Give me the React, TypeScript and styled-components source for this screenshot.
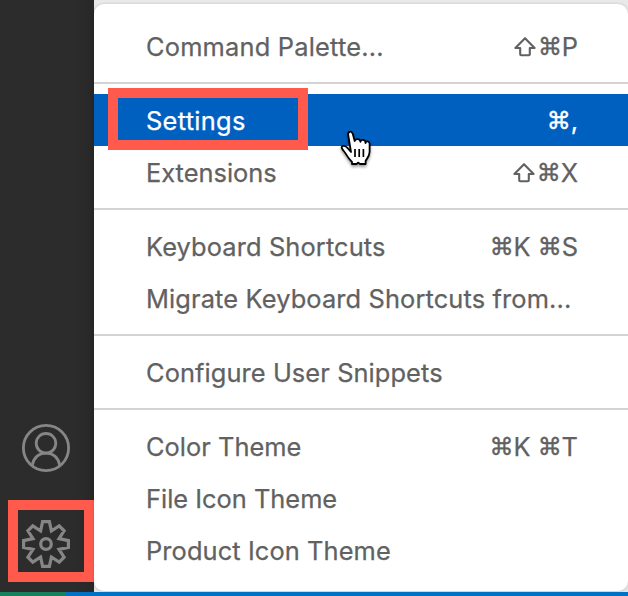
import React from "react";
import styled, { createGlobalStyle, css } from "styled-components";

const GlobalStyle = createGlobalStyle`
  html, body { margin: 0; padding: 0; overflow: hidden; }
  *, *::before, *::after { box-sizing: border-box; }
`;

const Window = styled.div`
  position: relative;
  display: grid;
  grid-template-columns: 94px 1fr;
  grid-template-rows: 592px 4px;
  width: 628px;
  height: 596px;
  overflow: hidden;
  background: #e9e9e9;
  font-family: Inter, "Liberation Sans", sans-serif;
`;

const ActivityBar = styled.nav`
  display: flex;
  flex-direction: column;
  justify-content: flex-end;
  align-items: flex-start;
  padding: 0 0 10px 8px;
  background: linear-gradient(to right, #2c2c2c 0, #2c2c2c 74px, #272727 100%);
`;

const Activity = styled.button<{ $marked?: boolean }>`
  display: flex;
  align-items: center;
  width: 86px;
  border: 0;
  background: none;
  color: #868686;
  ${(p) =>
    p.$marked
      ? css`
          height: 82px;
          padding: 6px 0 0 4px;
          border: 10px solid #ff5a4c;
        `
      : css`
          height: 104px;
          padding: 0 0 0 14px;
        `}
`;

const Glyph = styled.svg`
  display: block;
  flex: none;
  overflow: visible;
`;

const Editor = styled.main`
  padding-top: 4px;
  background: linear-gradient(#e9e9e9, #e5e5e5);
`;

const Menu = styled.div`
  height: 587px;
  padding: 16px 0 15px;
  border-radius: 10px;
  background: #fff;
  box-shadow: 0 0 3px rgba(0, 0, 0, 0.18);
`;

const MenuItem = styled.div<{ $active?: boolean }>`
  display: flex;
  align-items: center;
  justify-content: space-between;
  height: 52px;
  padding: 2px 50px 0 52px;
  background: ${(p) => (p.$active ? "#0060c0" : "transparent")};
  color: ${(p) => (p.$active ? "#fff" : "#616161")};
  -webkit-text-stroke: 0.25px currentColor;
`;

const Label = styled.span<{ $tracking: number }>`
  font-size: 25.4px;
  line-height: 50px;
  white-space: nowrap;
  letter-spacing: ${(p) => p.$tracking}px;
`;

const Shortcut = styled.span`
  display: flex;
  align-items: center;
  font-size: 25.4px;
  line-height: 50px;
  white-space: pre;
`;

const KeySymbol = styled.span`
  display: inline-block;
  width: 23.9px;
  font-family: "DejaVu Sans", sans-serif;
  font-size: 24px;
  -webkit-text-stroke: 0.4px currentColor;
`;

const ShiftGlyph = styled(Glyph)`
  margin: 0 1.5px 0 0;
`;

const Separator = styled.hr`
  height: 2px;
  margin: 10px 0;
  border: 0;
  background: #d4d4d4;
`;

const RemoteStatus = styled.div`
  width: 66px;
  background: #16825d;
`;

const StatusBar = styled.footer`
  grid-column: 1 / 3;
  display: flex;
  background: #0072c6;
`;

const Highlight = styled.div`
  position: absolute;
  left: 108px;
  top: 88px;
  width: 200px;
  height: 62px;
  border: 10px solid #ff5a4c;
`;

const Pointer = styled.svg`
  position: absolute;
  left: 338px;
  top: 128px;
  overflow: visible;
  filter: drop-shadow(0 2px 1.5px rgba(0, 0, 0, 0.4));
`;

type Entry = { label: string; keys?: string; active?: boolean; tracking?: number };

const groups: Entry[][] = [
  [{ label: "Command Palette...", keys: "⇧⌘P", tracking: 0.2 }],
  [
    { label: "Settings", keys: "⌘,", active: true, tracking: 0.3 },
    { label: "Extensions", keys: "⇧⌘X" },
  ],
  [
    { label: "Keyboard Shortcuts", keys: "⌘K ⌘S", tracking: 0.12 },
    { label: "Migrate Keyboard Shortcuts from...", tracking: 0.13 },
  ],
  [{ label: "Configure User Snippets", tracking: 0.09 }],
  [
    { label: "Color Theme", keys: "⌘K ⌘T", tracking: 0.03 },
    { label: "File Icon Theme" },
    { label: "Product Icon Theme", tracking: 0.1 },
  ],
];

function ShiftIcon() {
  return (
    <ShiftGlyph
      width="22"
      height="20"
      viewBox="0 0 22 20"
      fill="none"
      stroke="currentColor"
      strokeWidth="2.1"
      strokeLinejoin="round"
      role="img"
      aria-label="Shift"
    >
      <path d="M11 1.2L20.6 11H15.8V17.2Q15.8 18.2 14.8 18.2H7.2Q6.2 18.2 6.2 17.2V11H1.4Z" />
    </ShiftGlyph>
  );
}

function Keys({ value }: { value: string }) {
  return (
    <Shortcut>
      {Array.from(value).map((c, i) => {
        if (c === "⇧") return <ShiftIcon key={i} />;
        if (c === "⌘") return <KeySymbol key={i}>{c}</KeySymbol>;
        return <span key={i}>{c}</span>;
      })}
    </Shortcut>
  );
}

function AccountIcon() {
  return (
    <Glyph width="48" height="48" viewBox="0 0 48 48" fill="none" stroke="currentColor" strokeWidth="2.8">
      <circle cx="24" cy="24" r="22.6" />
      <circle cx="24" cy="19.3" r="9.8" />
      <path d="M10.3 41.5C11.4 33.8 16.8 29.1 24 29.1S36.6 33.8 37.7 41.5" />
    </Glyph>
  );
}

const gearPath =
  "M20.6 1.6H27.4L29.4 11L37.2 5.9L42.1 10.8L37 18.6L46.4 20.6V27.4L37 29.4L42.1 37.2L37.2 42.1L29.4 37L27.4 46.4H20.6L18.6 37L10.8 42.1L5.9 37.2L11 29.4L1.6 27.4V20.6L11 18.6L5.9 10.8L10.8 5.9L18.6 11Z";

function GearIcon() {
  return (
    <Glyph width="48" height="48" viewBox="0 0 48 48" fill="none" stroke="currentColor" strokeWidth="3.2">
      <path d={gearPath} />
      <circle cx="24" cy="24" r="5.3" />
    </Glyph>
  );
}

export default function App() {
  return (
    <>
      <GlobalStyle />
      <Window>
        <ActivityBar>
          <Activity aria-label="Accounts">
            <AccountIcon />
          </Activity>
          <Activity aria-label="Manage" $marked>
            <GearIcon />
          </Activity>
        </ActivityBar>
        <Editor>
          <Menu>
            {groups.map((group, g) => (
              <React.Fragment key={g}>
                {g > 0 && <Separator />}
                {group.map((e) => (
                  <MenuItem key={e.label} $active={e.active}>
                    <Label $tracking={e.tracking ?? 0}>{e.label}</Label>
                    {e.keys && <Keys value={e.keys} />}
                  </MenuItem>
                ))}
              </React.Fragment>
            ))}
          </Menu>
        </Editor>
        <StatusBar>
          <RemoteStatus />
        </StatusBar>
        <Highlight />
        <Pointer width="36" height="38" viewBox="0 0 36 38">
          <path
            d="M13 24 9 19.5C6.5 16.8 3 17.5 3.8 20.2C4.5 22 6.5 23.6 8.2 26.5C10 29.5 11 31.2 14 34V36H18.7L20 34.6L22 36H27.6V33C29 30.5 31.4 28.5 31.6 24V15.7C31.5 13 28 12.5 27.5 15C27.7 11.2 23.2 10.8 22.4 13.8C22.2 10.4 17.5 10.2 16.7 13L14.8 6C13.6 2.2 9.4 3.6 10.2 7Z"
            fill="#fff"
            stroke="#000"
            strokeWidth="1.8"
            strokeLinejoin="round"
          />
          <path d="M17 21V29M21.2 21V29M25.4 21V29" stroke="#000" strokeWidth="1.7" />
        </Pointer>
      </Window>
    </>
  );
}
